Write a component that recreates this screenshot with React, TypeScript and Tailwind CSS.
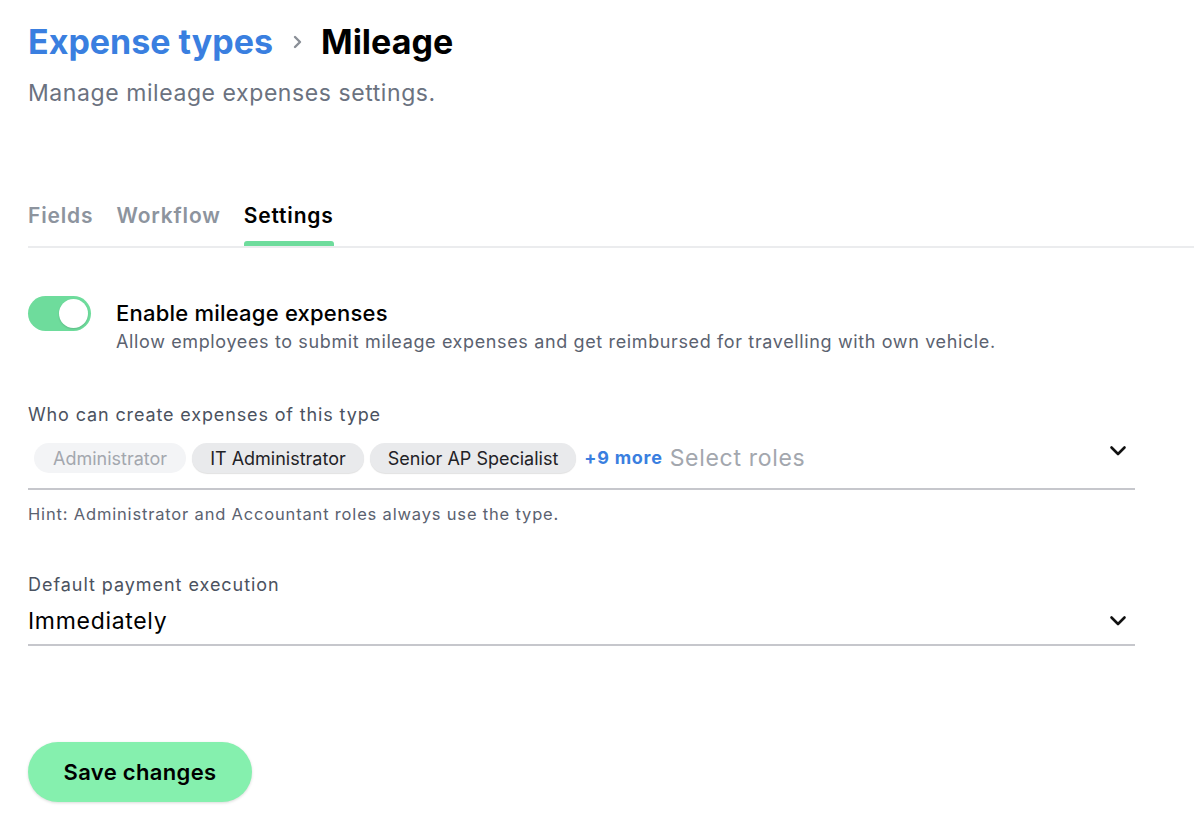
const font = { fontFamily: "Inter, 'Noto Sans', sans-serif" };

function Chip({ label, muted }: { label: string; muted?: boolean }) {
  return (
    <span
      className={
        muted
          ? "h-[30px] px-[19px] flex items-center rounded-full bg-[#f3f4f6] text-[#a3a7ae] text-[18px]"
          : "h-[30px] px-[18px] flex items-center rounded-full bg-[#e9eaec] text-[#1f2226] text-[18px] shadow-[0_1px_1px_rgba(0,0,0,0.12)]"
      }
    >
      {label}
    </span>
  );
}

function Chevron({ className }: { className?: string }) {
  return (
    <svg className={className} width="18" height="12" viewBox="0 0 18 12" fill="none">
      <path d="M2.5 2.5 L9 9 L15.5 2.5" stroke="#111" strokeWidth="2.6" strokeLinecap="round" strokeLinejoin="round" />
    </svg>
  );
}

export default function App() {
  return (
    <div className="min-h-screen bg-white pl-7 pt-[22px] text-black" style={font}>
      {/* Header */}
      <div className="flex items-center">
        <h1 className="text-[34px] leading-[40px] font-bold text-[#3a7fe0]">Expense types</h1>
        <svg className="ml-[20px] mr-[19px]" width="9" height="14" viewBox="0 0 9 14" fill="none">
          <path d="M2 2 L7 7 L2 12" stroke="#8a8f97" strokeWidth="2.4" strokeLinecap="round" strokeLinejoin="round" />
        </svg>
        <h1 className="text-[34px] leading-[40px] font-bold">Mileage</h1>
      </div>
      <p className="mt-[16px] text-[23px] leading-[30px] tracking-[0.025em] text-[#6b7280]">
        Manage mileage expenses settings.
      </p>

      {/* Tabs */}
      <div className="mt-[94px] flex gap-[23px] border-b-2 border-[#ebecee]">
        <div className="pb-[16px] text-[21px] leading-[28px] font-semibold tracking-[0.04em] text-[#8d949e]">Fields</div>
        <div className="pb-[16px] text-[21px] leading-[28px] font-semibold tracking-[0.04em] text-[#8d949e]">Workflow</div>
        <div className="relative pb-[16px] text-[21px] leading-[28px] font-semibold tracking-[0.04em] text-black">
          Settings
          <div className="absolute left-0 right-0 bottom-0 h-[5px] rounded-t-[3px] bg-[#6edc9c]" />
        </div>
      </div>

      <div className="w-[1107px]">
        {/* Toggle */}
        <div className="mt-[48px] flex gap-[25px]">
          <div className="w-[63px] h-[35px] rounded-full bg-[#6edc9c] flex items-center justify-end pr-[3px] shrink-0">
            <div className="w-[29px] h-[29px] rounded-full bg-white shadow-[0_1px_2px_rgba(0,0,0,0.15)]" />
          </div>
          <div>
            <div className="text-[22px] leading-[34px] font-medium tracking-[0.01em]">Enable mileage expenses</div>
            <div className="text-[18px] leading-[24px] tracking-[0.035em] text-[#5b6270]">
              Allow employees to submit mileage expenses and get reimbursed for travelling with own vehicle.
            </div>
          </div>
        </div>

        {/* Roles */}
        <div className="mt-[49px] text-[18px] leading-[24px] tracking-[0.048em] text-[#4b5260]">
          Who can create expenses of this type
        </div>
        <div className="mt-[16px] flex items-center border-b-2 border-[#c6c7cc] pb-[15px] pl-[6px]">
          <div className="flex items-center gap-[6px]">
            <Chip label="Administrator" muted />
            <Chip label="IT Administrator" />
            <Chip label="Senior AP Specialist" />
          </div>
          <span className="ml-[8px] text-[18px] leading-[30px] font-bold tracking-[0.04em] text-[#3a7fe0]">+9 more</span>
          <span className="ml-[7px] text-[23px] leading-[30px] tracking-[0.03em] text-[#a3a7ae]">Select roles</span>
          <Chevron className="ml-auto mr-[8px] -translate-y-[7px]" />
        </div>
        <div className="mt-[13px] text-[16.5px] leading-[22px] tracking-[0.05em] text-[#5b6270]">
          Hint: Administrator and Accountant roles always use the type.
        </div>

        {/* Payment execution */}
        <div className="mt-[48px] text-[18px] leading-[24px] tracking-[0.053em] text-[#4b5260]">
          Default payment execution
        </div>
        <div className="mt-[9px] flex items-center border-b-2 border-[#c6c7cc] pb-[8px]">
          <span className="text-[23px] leading-[30px] tracking-[0.03em]">Immediately</span>
          <Chevron className="ml-auto mr-[8px]" />
        </div>

        <button className="mt-[96px] w-[224px] h-[60px] rounded-full bg-[#85f0ae] text-[22px] font-semibold tracking-[0.015em] shadow-[0_1px_3px_rgba(0,0,0,0.15)]">
          Save changes
        </button>
      </div>
    </div>
  );
}
